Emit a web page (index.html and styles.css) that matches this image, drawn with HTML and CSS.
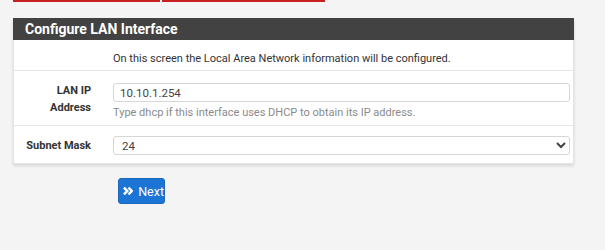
FILE: index.html
```html
<!DOCTYPE html>
<html lang="en">

<head>
  <meta charset="UTF-8">
  <meta name="viewport" content="width=device-width, initial-scale=1.0">
  <title>Wizard</title>
  <link rel="stylesheet" href="styles.css">
</head>

<body>
  <div class="topbar">
    <div class="bar bar-left"></div>
    <div class="bar bar-right"></div>
  </div>

  <div class="panel">
    <div class="panel-heading">Configure LAN Interface</div>
    <div class="panel-body">
      <div class="form-row desc-row">
        <div></div>
        <div class="desc">On this screen the Local Area Network information will be configured.</div>
      </div>
      <div class="form-row ip-row">
        <label class="form-label" for="lanip">LAN IP<br>Address</label>
        <div>
          <input type="text" id="lanip" class="form-control" value="10.10.1.254">
          <div class="help">Type dhcp if this interface uses DHCP to obtain its IP address.</div>
        </div>
      </div>
      <div class="form-row mask-row">
        <label class="form-label" for="subnet">Subnet Mask</label>
        <div>
          <select id="subnet" class="form-control">
            <option>24</option>
          </select>
        </div>
      </div>
    </div>
  </div>

  <div class="actions">
    <button class="btn-next">
      <svg class="icon" width="11" height="10" viewBox="0 0 11 10">
        <path d="M1 1.3 L4.6 5 L1 8.7" fill="none" stroke="#fff" stroke-width="2.7" />
        <path d="M6 1.3 L9.6 5 L6 8.7" fill="none" stroke="#fff" stroke-width="2.7" />
      </svg>
      Next
    </button>
  </div>
</body>

</html>
```

FILE: styles.css
```css
* {
  box-sizing: border-box;
}

body {
  margin: 0;
  background: #f4f4f4;
  font-family: Roboto, "Liberation Sans", sans-serif;
  font-size: 11px;
  color: #333;
}

.topbar {
  display: flex;
  gap: 2px;
  margin-left: 13px;
}

.bar {
  height: 2px;
  background: #c8201f;
}

.bar-left {
  width: 147px;
}

.bar-right {
  width: 163px;
}

.panel {
  width: 561px;
  margin: 16px 0 0 13px;
  background: #fff;
  border: 1px solid #e4e4e4;
  border-top: none;
  box-shadow: 0 2px 3px rgba(0, 0, 0, 0.12);
}

.panel-heading {
  height: 22px;
  line-height: 22px;
  margin: 0 -1px;
  padding-left: 12px;
  background: #424242;
  color: #fff;
  font-weight: bold;
  font-size: 14px;
}

.form-row {
  display: grid;
  grid-template-columns: 99px 1fr;
  border-bottom: 1px solid #e6e6e6;
  padding-right: 3px;
}

.form-row:last-child {
  border-bottom: none;
}

.desc-row {
  height: 31px;
  padding-top: 12px;
  line-height: 14px;
}

.ip-row {
  height: 55px;
  padding-top: 12px;
}

.mask-row {
  height: 37px;
  padding-top: 10px;
}

.form-label {
  font-weight: bold;
  text-align: right;
  padding-right: 22px;
  line-height: 17px;
  padding-top: 1px;
}

.ip-row .form-label {
  padding-top: 0;
  margin-top: -1px;
}

.form-control {
  display: block;
  width: 100%;
  height: 19px;
  padding: 0 6px;
  border: 1px solid #d6d6d6;
  border-radius: 3px;
  background: #fff;
  font-family: Roboto, "Liberation Sans", sans-serif;
  font-size: 11.5px;
  color: #444;
}

select.form-control {
  padding: 0 4px;
}

.help {
  margin-top: 4px;
  color: #8a8a8a;
}

.actions {
  padding: 14px 0 0 118px;
}

.btn-next {
  display: flex;
  align-items: center;
  gap: 5px;
  width: 47px;
  height: 26px;
  padding: 0 0 0 4px;
  border: 1px solid #1a68bd;
  border-radius: 3px;
  background: #1c74d4;
  color: #fff;
  font-family: Roboto, "Liberation Sans", sans-serif;
  font-size: 12.5px;
}
```
